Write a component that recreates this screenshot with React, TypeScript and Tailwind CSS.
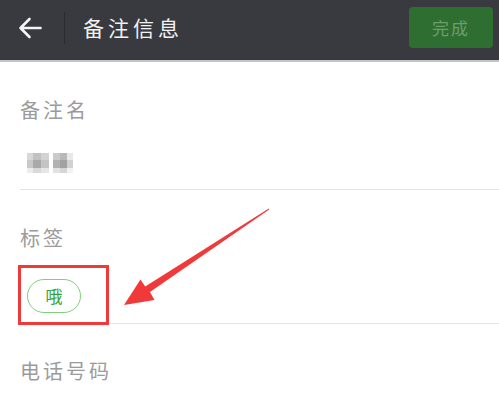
import React from "react";

const mosaic = [
  ["#d8d8d8", "#c2c2c2", "#d2d2d2", "#ffffff", "#cacaca", "#b8b8b8", "#e8e8e8"],
  ["#c8c8c8", "#a9a9a9", "#c4c4c4", "#ffffff", "#b2b2b2", "#a2a2a2", "#d2d2d2"],
  ["#ececec", "#d9d9d9", "#e6e6e6", "#ffffff", "#e2e2e2", "#d6d6d6", "#f2f2f2"],
];

const BlurredName = () => (
  <div className="grid grid-cols-[6px_8px_8px_4px_7px_7px_6px] grid-rows-[7px_8px_5px]">
    {mosaic.flat().map((c, i) => (
      <div key={i} style={{ backgroundColor: c }} />
    ))}
  </div>
);

const Label = ({ children }: { children: React.ReactNode }) => (
  <div className="text-[20px] leading-[20px] tracking-[3px] text-[#9b9b9b]">{children}</div>
);

const App = () => {
  return (
    <div
      className="relative w-[499px] h-[396px] overflow-hidden bg-white"
      style={{ fontFamily: '"Noto Sans CJK SC", "Noto Sans", sans-serif' }}
    >
      {/* top bar */}
      <div className="h-[62px] bg-[#393a3f] flex items-center pb-[5px] border-b-2 border-[#c4c4c6]">
        <button className="ml-[18px] w-6 h-6 flex items-center justify-center">
          <svg width="24" height="24" viewBox="0 0 24 24" fill="none">
            <path d="M22.5 12H3M11.5 3 L2.5 12 L11.5 21" stroke="#f4f4f4" strokeWidth="2.6" strokeLinecap="round" strokeLinejoin="round" />
          </svg>
        </button>
        <div className="ml-[22px] w-px h-8 bg-[#2a2b2f]" />
        <div className="ml-[18px] text-[21px] tracking-[4px] text-[#f2f2f2]">备注信息</div>
        <button className="ml-auto mr-[6px] w-[84px] h-[41px] rounded-[4px] bg-[#2f6e31] text-[17px] tracking-[2px] text-[#6b9e6b]">
          完成
        </button>
      </div>

      {/* form */}
      <div className="pl-5">
        <div className="pt-[38px]">
          <Label>备注名</Label>
          <div className="mt-[33px] ml-[7px] h-5">
            <BlurredName />
          </div>
          <div className="mt-4 h-px bg-[#e4e4e4]" />
        </div>

        <div className="pt-[38px]">
          <Label>标签</Label>
          <div className="mt-[31px] ml-[7px] w-[54px] h-[34px] rounded-full border border-[#7fcf7f] flex items-center justify-center text-[17px] text-[#32a232]">
            哦
          </div>
          <div className="mt-[10px] h-px bg-[#e4e4e4]" />
        </div>

        <div className="pt-[37px]">
          <Label>电话号码</Label>
        </div>
      </div>

      {/* annotation */}
      <div className="absolute left-[18px] top-[265px] w-[91px] h-[60px] border-[3px] border-[#f03a3a]" />
      <svg className="absolute inset-0 pointer-events-none" width="499" height="396">
        <polygon
          points="269.2,209.6 150,292 154.5,300 124,305 140.5,279.5 145.2,286.4 268.8,208.6"
          fill="#f03a3a"
        />
      </svg>
    </div>
  );
};

export default App;
